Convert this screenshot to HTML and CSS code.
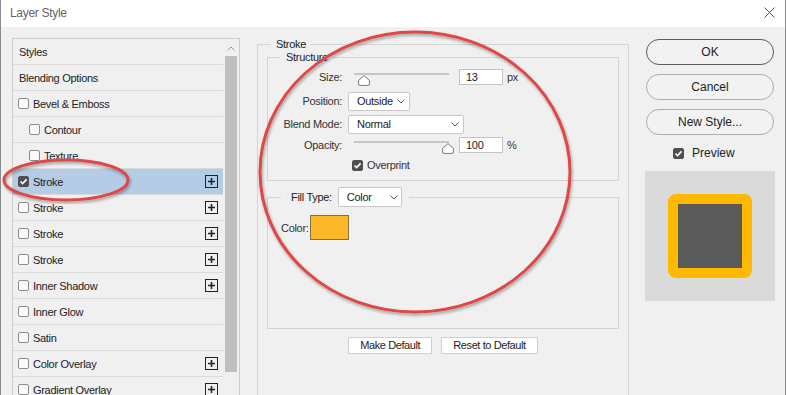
FILE: index.html
```html
<!DOCTYPE html>
<html lang="en">
<head>
    <meta charset="UTF-8">
    <meta name="viewport" content="width=device-width, initial-scale=1.0">
    <title>Layer Style</title>
    <link rel="stylesheet" href="styles.css">
</head>
<body>
    <div class="window">
        <div class="titlebar">
            <span class="title">Layer Style</span>
            <svg class="close" width="11" height="11" viewBox="0 0 11 11">
                <path d="M0.5 0.5 L10.5 10.5 M10.5 0.5 L0.5 10.5" stroke="#555" stroke-width="1" fill="none"/>
            </svg>
        </div>

        <div class="dialog">
            <!-- 左侧样式列表 -->
            <div class="styles-list">
                <div class="rows">
                    <div class="row"><span class="name plain">Styles</span></div>
                    <div class="row"><span class="name plain">Blending Options</span></div>
                    <div class="row"><span class="check"></span><span class="name">Bevel &amp; Emboss</span></div>
                    <div class="row sub"><span class="check"></span><span class="name">Contour</span></div>
                    <div class="row sub"><span class="check"></span><span class="name">Texture</span></div>
                    <div class="row selected">
                        <span class="check on"><svg viewBox="0 0 11 11"><path d="M2.5 5.5 L4.6 7.6 L8.6 3.4" stroke="#fff" stroke-width="1.7" fill="none"/></svg></span>
                        <span class="name">Stroke</span>
                        <svg class="plus" viewBox="0 0 13 13"><rect x="0.5" y="0.5" width="12" height="12" fill="none" stroke="#222"/><path d="M6.5 3v7M3 6.5h7" stroke="#222" stroke-width="1.6"/></svg>
                    </div>
                    <div class="row">
                        <span class="check"></span><span class="name">Stroke</span>
                        <svg class="plus" viewBox="0 0 13 13"><rect x="0.5" y="0.5" width="12" height="12" fill="none" stroke="#222"/><path d="M6.5 3v7M3 6.5h7" stroke="#222" stroke-width="1.6"/></svg>
                    </div>
                    <div class="row">
                        <span class="check"></span><span class="name">Stroke</span>
                        <svg class="plus" viewBox="0 0 13 13"><rect x="0.5" y="0.5" width="12" height="12" fill="none" stroke="#222"/><path d="M6.5 3v7M3 6.5h7" stroke="#222" stroke-width="1.6"/></svg>
                    </div>
                    <div class="row">
                        <span class="check"></span><span class="name">Stroke</span>
                        <svg class="plus" viewBox="0 0 13 13"><rect x="0.5" y="0.5" width="12" height="12" fill="none" stroke="#222"/><path d="M6.5 3v7M3 6.5h7" stroke="#222" stroke-width="1.6"/></svg>
                    </div>
                    <div class="row">
                        <span class="check"></span><span class="name">Inner Shadow</span>
                        <svg class="plus" viewBox="0 0 13 13"><rect x="0.5" y="0.5" width="12" height="12" fill="none" stroke="#222"/><path d="M6.5 3v7M3 6.5h7" stroke="#222" stroke-width="1.6"/></svg>
                    </div>
                    <div class="row"><span class="check"></span><span class="name">Inner Glow</span></div>
                    <div class="row"><span class="check"></span><span class="name">Satin</span></div>
                    <div class="row">
                        <span class="check"></span><span class="name">Color Overlay</span>
                        <svg class="plus" viewBox="0 0 13 13"><rect x="0.5" y="0.5" width="12" height="12" fill="none" stroke="#222"/><path d="M6.5 3v7M3 6.5h7" stroke="#222" stroke-width="1.6"/></svg>
                    </div>
                    <div class="row">
                        <span class="check"></span><span class="name">Gradient Overlay</span>
                        <svg class="plus" viewBox="0 0 13 13"><rect x="0.5" y="0.5" width="12" height="12" fill="none" stroke="#222"/><path d="M6.5 3v7M3 6.5h7" stroke="#222" stroke-width="1.6"/></svg>
                    </div>
                </div>
                <div class="scrollbar">
                    <svg class="scroll-up" width="8" height="5" viewBox="0 0 8 5"><path d="M0.5 4.5 L4 1 L7.5 4.5" stroke="#999" fill="none"/></svg>
                    <div class="thumb"></div>
                </div>
            </div>

            <!-- 描边设置 -->
            <fieldset class="group stroke-group">
                <legend>Stroke</legend>

                <fieldset class="group structure">
                    <legend>Structure</legend>
                    <div class="form">
                        <label>Size:</label>
                        <div class="control">
                            <div class="slider">
                                <div class="track"></div>
                                <svg class="knob" style="left: 4px" width="12" height="11" viewBox="0 0 12 11"><path d="M6 0.6 L11.4 5.4 V9 Q11.4 10.4 10 10.4 H2 Q0.6 10.4 0.6 9 V5.4 Z" fill="#fff" stroke="#7a7a7a"/></svg>
                            </div>
                            <div class="field">13</div>
                            <span class="unit">px</span>
                        </div>

                        <label>Position:</label>
                        <div class="control">
                            <div class="select position">
                                <span>Outside</span>
                                <svg width="8" height="5" viewBox="0 0 8 5"><path d="M0.5 0.5 L4 4 L7.5 0.5" stroke="#555" fill="none"/></svg>
                            </div>
                        </div>

                        <label>Blend Mode:</label>
                        <div class="control">
                            <div class="select blend">
                                <span>Normal</span>
                                <svg width="8" height="5" viewBox="0 0 8 5"><path d="M0.5 0.5 L4 4 L7.5 0.5" stroke="#555" fill="none"/></svg>
                            </div>
                        </div>

                        <label>Opacity:</label>
                        <div class="control">
                            <div class="slider">
                                <div class="track"></div>
                                <svg class="knob" style="left: 88px" width="12" height="11" viewBox="0 0 12 11"><path d="M6 0.6 L11.4 5.4 V9 Q11.4 10.4 10 10.4 H2 Q0.6 10.4 0.6 9 V5.4 Z" fill="#fff" stroke="#7a7a7a"/></svg>
                            </div>
                            <div class="field">100</div>
                            <span class="unit">%</span>
                        </div>

                        <span></span>
                        <div class="control overprint">
                            <span class="check on"><svg viewBox="0 0 11 11"><path d="M2.5 5.5 L4.6 7.6 L8.6 3.4" stroke="#fff" stroke-width="1.7" fill="none"/></svg></span>
                            <span>Overprint</span>
                        </div>
                    </div>
                </fieldset>

                <fieldset class="group fill">
                    <legend>
                        <span class="fill-type">
                            <span>Fill Type:</span>
                            <span class="select color-type">
                                <span>Color</span>
                                <svg width="8" height="5" viewBox="0 0 8 5"><path d="M0.5 0.5 L4 4 L7.5 0.5" stroke="#555" fill="none"/></svg>
                            </span>
                        </span>
                    </legend>
                    <div class="fill-body">
                        <span>Color:</span>
                        <span class="swatch"></span>
                    </div>
                </fieldset>

                <div class="defaults">
                    <button class="small-btn">Make Default</button>
                    <button class="small-btn">Reset to Default</button>
                </div>
            </fieldset>

            <!-- 右侧按钮和预览 -->
            <div class="actions">
                <button class="pill default">OK</button>
                <button class="pill">Cancel</button>
                <button class="pill">New Style...</button>
                <div class="preview-toggle">
                    <span class="check on"><svg viewBox="0 0 11 11"><path d="M2.5 5.5 L4.6 7.6 L8.6 3.4" stroke="#fff" stroke-width="1.7" fill="none"/></svg></span>
                    <span>Preview</span>
                </div>
                <div class="preview">
                    <div class="preview-stroke"><div class="preview-fill"></div></div>
                </div>
            </div>
        </div>

        <!-- 红色标注圈 -->
        <svg class="annotations" width="786" height="395" viewBox="0 0 786 395">
            <defs>
                <filter id="shade" x="-10%" y="-10%" width="120%" height="120%">
                    <feDropShadow dx="1" dy="2" stdDeviation="1.5" flood-color="#000" flood-opacity="0.35"/>
                </filter>
            </defs>
            <ellipse cx="414" cy="172" rx="155" ry="140" fill="none" stroke="#e04646" stroke-width="3" filter="url(#shade)"/>
            <ellipse cx="65" cy="180" rx="62" ry="20" fill="none" stroke="#e04646" stroke-width="3" filter="url(#shade)"/>
        </svg>
    </div>
</body>
</html>
```

FILE: styles.css
```css
html, body {
    margin: 0;
    padding: 0;
}
body {
    font-family: "Liberation Sans", Arial, sans-serif;
    font-size: 11px;
    letter-spacing: -0.3px;
    color: #222;
    background-color: #f0f0f0;
    width: 786px;
    height: 395px;
    overflow: hidden;
}
.window {
    position: relative;
    height: 395px;
    border-left: 1px solid #8a8a8a;
    border-right: 1px solid #8a8a8a;
    box-sizing: border-box;
    overflow: hidden;
}
.titlebar {
    height: 27px;
    background-color: #fff;
    display: flex;
    align-items: center;
    justify-content: space-between;
    padding: 0 10px 2px 9px;
    box-sizing: border-box;
}
.title {
    font-size: 12px;
    color: #666;
}
.dialog {
    display: flex;
    align-items: flex-start;
    padding: 11px 0 0 11px;
}

/* 样式列表 */
.styles-list {
    width: 228px;
    height: 357px;
    border: 1px solid #cdcdcd;
    border-bottom: none;
    box-sizing: border-box;
    display: flex;
    flex-shrink: 0;
    overflow: hidden;
}
.rows {
    width: 210px;
    flex-shrink: 0;
}
.row {
    height: 26px;
    border-bottom: 1px solid #dadada;
    box-sizing: border-box;
    display: flex;
    align-items: center;
    padding-left: 5px;
    padding-right: 5px;
}
.row.sub {
    padding-left: 16px;
}
.row.selected {
    background-color: #b5cce6;
}
.name {
    margin-left: 4px;
}
.name.plain {
    margin-left: 1px;
}
.check {
    width: 11px;
    height: 11px;
    border: 1px solid #8c8c8c;
    border-radius: 2px;
    background-color: #fafafa;
    box-sizing: border-box;
    display: inline-block;
    flex-shrink: 0;
}
.check.on {
    background-color: #4f4f4f;
    border-color: #4f4f4f;
}
.check svg {
    display: block;
    width: 11px;
    height: 11px;
    margin: -1px;
}
.plus {
    width: 13px;
    height: 13px;
    margin-left: auto;
}
.scrollbar {
    width: 16px;
    display: flex;
    flex-direction: column;
    align-items: center;
}
.scroll-up {
    margin-top: 7px;
}
.thumb {
    width: 12px;
    height: 316px;
    margin-top: 5px;
    background-color: #bfbfbf;
}

/* 分组框 */
fieldset.group {
    margin: 0;
    min-width: 0;
    border: 1px solid #d4d4d4;
    box-sizing: border-box;
}
fieldset.group legend {
    line-height: 13px;
    padding: 0;
}
.stroke-group {
    width: 372px;
    height: 357px;
    margin-left: 17px !important;
    padding: 0 9px;
    border-bottom: none !important;
}
.stroke-group > legend {
    margin-left: 4px;
    padding: 0 5px !important;
}
.structure {
    padding: 1px 0 5px 0;
}
.structure > legend {
    margin-left: 12px;
    padding: 0 6px !important;
}
.form {
    display: grid;
    grid-template-columns: 74px 1fr;
    grid-template-rows: 24px 24px 22px 20px 20px;
    column-gap: 6px;
    align-items: center;
    color: #333;
}
.form label {
    text-align: right;
}
.control {
    display: flex;
    align-items: center;
}
.slider {
    position: relative;
    width: 95px;
    height: 16px;
    margin-left: 6px;
}
.track {
    margin-top: 4px;
    height: 2px;
    background-color: #c6c6c6;
}
.knob {
    position: absolute;
    top: 6px;
}
.field {
    width: 44px;
    height: 16px;
    margin-left: 10px;
    border: 1px solid #c4c4c4;
    background-color: #fff;
    box-sizing: border-box;
    padding-left: 6px;
    line-height: 14px;
    color: #222;
}
.unit {
    margin-left: 4px;
}
.select {
    height: 19px;
    border: 1px solid #c8c8c8;
    border-radius: 2px;
    background-color: #fff;
    box-sizing: border-box;
    display: flex;
    align-items: center;
    justify-content: space-between;
    padding: 0 4px 0 8px;
    color: #222;
}
.select.position {
    width: 62px;
}
.select.blend {
    width: 116px;
}
.overprint {
    margin-left: 4px;
    gap: 4px;
}
.fill {
    margin-top: 6px !important;
    padding: 0 0 0 13px;
}
.fill > legend {
    margin-left: 0;
    padding: 0 7px 0 10px !important;
}
.fill-type {
    display: flex;
    align-items: center;
    gap: 6px;
    color: #222;
}
.select.color-type {
    width: 64px;
    height: 20px;
    padding-right: 3px;
}
.fill-body {
    height: 121px;
    box-sizing: border-box;
    padding-top: 8px;
    display: flex;
    align-items: flex-start;
    gap: 1px;
    color: #333;
}
.fill-body > span:first-child {
    margin-top: 7px;
}
.swatch {
    width: 39px;
    height: 25px;
    background-color: #fcb827;
    border: 1px solid #86703f;
    box-sizing: border-box;
}
.defaults {
    display: flex;
    justify-content: center;
    gap: 9px;
    margin-top: 8px;
}
.small-btn {
    font-family: inherit;
    font-size: 11px;
    letter-spacing: -0.4px;
    color: #222;
    height: 17px;
    padding: 0 11px;
    border: 1px solid #d0d0d0;
    background-color: #fff;
    line-height: 15px;
    white-space: nowrap;
}

/* 右侧 */
.actions {
    width: 128px;
    margin-left: 17px;
    margin-top: 1px;
    display: flex;
    flex-direction: column;
    flex-shrink: 0;
}
.pill {
    font-family: inherit;
    font-size: 12px;
    letter-spacing: 0;
    color: #222;
    height: 26px;
    border-radius: 13px;
    border: 1px solid #adadad;
    background-color: #f2f2f2;
    margin-bottom: 9px;
    padding: 0;
}
.pill.default {
    border-color: #5c5c5c;
}
.preview-toggle {
    display: flex;
    align-items: center;
    gap: 8px;
    padding-left: 27px;
    height: 14px;
    margin-top: 2px;
    font-size: 12px;
    letter-spacing: 0;
}
.preview {
    width: 130px;
    height: 130px;
    margin: 11px 0 0 -1px;
    background-color: #d9dad9;
    display: flex;
    align-items: center;
    justify-content: center;
}
.preview-stroke {
    width: 84px;
    height: 84px;
    border-radius: 8px;
    background-color: #ffb900;
    display: flex;
    align-items: center;
    justify-content: center;
}
.preview-fill {
    width: 64px;
    height: 64px;
    background-color: #5a5a5a;
}

.annotations {
    position: absolute;
    top: 0;
    left: 0;
    pointer-events: none;
}
```
